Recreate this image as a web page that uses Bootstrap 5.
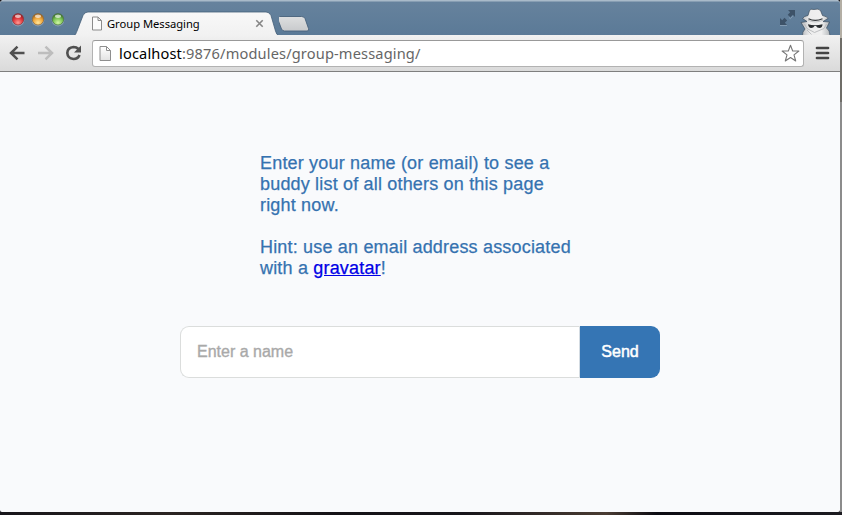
<!DOCTYPE html>
<html lang="en">
<head>
<meta charset="utf-8">
<meta name="viewport" content="width=device-width, initial-scale=1">
<title>Group Messaging</title>
<link rel="stylesheet" href="https://cdn.jsdelivr.net/npm/bootstrap@5.3.0/dist/css/bootstrap.min.css">
<style>
  html, body { height: 100%; }
  body { background: linear-gradient(90deg, #17151a, #2b2422 20%, #141216 40%, #17151a 55%, #4a3c33 72%, #0c0b12 78%, #1c1b20); padding: 0 2px 3px 0; font-family: "Liberation Sans", Arial, sans-serif; }
  .desktop-edge { width: 2px; height: 512px; right: 0; top: 0; background: linear-gradient(#b3aea4 0 38px, #6f6d68 38px 102px, #8c8c8c 102px); }
  .window { width: 840px; height: 512px; background: #f9fafc; border-radius: 4px 4px 2px 2px; }
  .titlebar { height: 35px; background: linear-gradient(#a9bac9 0, #a9bac9 1px, #66829d 2px, #5b7a97 100%); padding-left: 11px; }
  .lights { gap: 6px; padding-top: 12px; }
  .tab-row { padding-top: 11px; }
  .tab-shape { width: 206px; height: 24px; }
  .tab-shape > svg { left: 0; top: 0; }
  .tab-face { padding: 1px 15px 0 18px; height: 24px; }
  .tab-title { font: 11.2px/16px "Noto Sans", "Open Sans", sans-serif; color: #000; margin-left: 4px; letter-spacing: -.02px; }
  .toolbar { height: 37px; background: linear-gradient(#f1f1f1, #dadada); border-bottom: 1px solid #7f7f7f; padding: 0 10px 0 9px; }
  .omnibox { width: 712px; height: 27px; margin-left: 10px; background: #fff; border: 1px solid #b2b2b2; border-top-color: #999; border-radius: 3px; padding: 0 3px 0 6px; }
  .url { font: 14.6px/24px "Noto Sans", "Open Sans", sans-serif; color: #666; margin-left: 7px; letter-spacing: .15px; padding-bottom: 1px; }
  .url span { color: #000; }
  .intro { width: 320px; padding-top: 81px; margin-left: 260px; font-size: 18px; line-height: 21px; color: #3572b0; letter-spacing: .18px; -webkit-text-stroke: .25px; }
  .intro p { margin-bottom: 21px; }
  .intro a { color: #0000e6; }
  .name-form { width: 480px; height: 52px; margin: 47px 0 0 180px; }
  .name-form .form-control { border: 1px solid #dbdddc; border-right-color: #d3dbe2; border-radius: 9px 0 0 9px; padding: 0 16px; font-size: 16px; }
  .name-form .form-control::placeholder { color: #a9a9a9; opacity: 1; -webkit-text-stroke: .35px #a9a9a9; }
  .name-form .btn { width: 80px; background: #3575b4; color: #fff; border: 0; border-radius: 0 9px 9px 0; font-size: 16px; padding: 0; -webkit-text-stroke: .5px #fff; }
</style>
<script src="https://cdn.jsdelivr.net/npm/bootstrap@5.3.0/dist/js/bootstrap.bundle.min.js"></script>
</head>
<body class="overflow-hidden position-relative">
<div class="desktop-edge position-absolute"></div>
<div class="window overflow-hidden d-flex flex-column">
  <header class="titlebar d-flex align-items-start flex-shrink-0">
    <svg class="flex-shrink-0" width="54" height="35" viewBox="0 0 54 35">
      <defs>
        <radialGradient id="red" cx=".5" cy=".8" r=".7"><stop offset="0" stop-color="#ff9a94"/><stop offset=".6" stop-color="#e0383c"/><stop offset="1" stop-color="#a01c22"/></radialGradient>
        <radialGradient id="amber" cx=".5" cy=".8" r=".7"><stop offset="0" stop-color="#ffe69a"/><stop offset=".6" stop-color="#f0a83c"/><stop offset="1" stop-color="#a8691c"/></radialGradient>
        <radialGradient id="green" cx=".5" cy=".8" r=".7"><stop offset="0" stop-color="#d2f6a4"/><stop offset=".6" stop-color="#7cc456"/><stop offset="1" stop-color="#407c2c"/></radialGradient>
      </defs>
      <g fill="#8ba3b8"><circle cx="7" cy="20.2" r="6.2"/><circle cx="27" cy="20.2" r="6.2"/><circle cx="47" cy="20.2" r="6.2"/></g>
      <g stroke-width=".7"><circle cx="7" cy="19.3" r="5.7" fill="url(#red)" stroke="#81333b"/><circle cx="27" cy="19.3" r="5.7" fill="url(#amber)" stroke="#866336"/><circle cx="47" cy="19.3" r="5.7" fill="url(#green)" stroke="#48703f"/></g>
      <g fill="#fff" opacity=".65"><ellipse cx="7" cy="16.2" rx="3" ry="1.7"/><ellipse cx="27" cy="16.2" rx="3" ry="1.7"/><ellipse cx="47" cy="16.2" rx="3" ry="1.7"/></g>
    </svg>
    <div class="tab-row d-flex ms-2">
      <div class="tab-shape position-relative">
        <svg class="position-absolute" width="206" height="24" viewBox="0 0 206 24">
          <defs><linearGradient id="face" x2="0" y2="1"><stop stop-color="#f8f8f8"/><stop offset="1" stop-color="#f1f1f1"/></linearGradient></defs>
          <path d="M0 25C3 24 3 22 4 20L10 4.500Q11.500 1 15 1H193Q196.500 1 198 4.500L202.500 20Q203.500 24 206 25Z" fill="url(#face)" stroke="#455f79" stroke-width=".8"/>
        </svg>
        <div class="tab-face position-relative d-flex align-items-center">
          <svg width="12" height="15" viewBox="0 0 12 15"><path d="M1.500 1H7L10.500 4.500V14H1.500ZM7 1V4.500H10.500" fill="#fbfbfb" stroke="#8b8b8b"/></svg>
          <span class="tab-title">Group Messaging</span>
          <svg class="ms-auto" width="9" height="9" viewBox="0 0 9 9"><path d="M1.300 1.300L7.700 7.700M7.700 1.300L1.300 7.700" stroke="#858585" stroke-width="1.600"/></svg>
        </div>
      </div>
      <svg width="34" height="24" viewBox="0 0 34 24"><defs><linearGradient id="plus" x2="0" y2="1"><stop stop-color="#dedfe0"/><stop offset="1" stop-color="#c8cacc"/></linearGradient></defs><path d="M-1.500 7.500Q-2 5.500 .5 5.500H22.500Q25 5.500 26 7.500L29.500 17.500Q30.500 20 28 20H5.500Q3.500 20 2.500 18Z" fill="url(#plus)" stroke="#47617b" stroke-width=".9"/></svg>
    </div>
    <svg class="ms-auto flex-shrink-0" width="62" height="35" viewBox="0 0 62 35">
      <g fill="#3d5268"><path d="M10 10H17V17L14.800 14.800L12.300 17.300L9.700 14.700L12.200 12.200ZM2 18L4.200 20.200L6.500 17.800L9.200 20.500L6.800 22.800L9 25H2Z"/></g>
      <path d="M2 25.500H9M11 17.500L12.300 18.700L14.800 16.200" fill="none" stroke="#8ca2b7" stroke-width=".8"/>
      <defs><linearGradient id="spy" x2="1"><stop stop-color="#b4b7ba"/><stop offset=".3" stop-color="#ededed"/><stop offset=".7" stop-color="#f0f0f0"/><stop offset="1" stop-color="#b5b9bc"/></linearGradient></defs>
      <path d="M24.500 36Q24 32 27 29L23 22.500L29 21.500L24.500 18.500Q26 16 30 15.500L31.500 10.500Q32.500 8.500 36 9.500Q40.500 8.200 42.500 10.500L44.500 15.500Q49.500 16.500 50 18.500L45 21.500L51.500 22L48.500 28Q52 30 52 36Z" fill="url(#spy)" stroke="#3c4d5e" stroke-width=".7"/>
      <path d="M30 20.200Q37 23.700 45 20.200" fill="none" stroke="#c0c2c4" stroke-width="1"/>
      <path d="M30.500 18.800Q37 22 44.500 18.800" fill="none" stroke="#34383b" stroke-width="1.200"/>
      <path d="M30 24.300Q37 26 44.500 24.300Q44.500 28 41.500 28Q39 28 38 26H36.500Q35.500 28 33.200 28Q30.500 27.800 30 24.300Z" fill="#292d30"/>
      <path d="M26.500 24L29 28.500L36.500 32.500L46 28.500L48.500 24M29 30L33.500 34.500" fill="none" stroke="#b0b3b5" stroke-width=".8"/>
    </svg>
  </header>
  <nav class="toolbar d-flex align-items-center flex-shrink-0">
    <svg width="73" height="24" viewBox="0 0 73 24" fill="none">
      <path d="M15.500 12H2.500M8.500 5.700L2 12L8.500 18.300" stroke="#505050" stroke-width="2.500"/>
      <path d="M29 12H42.500M36.500 5.700L43 12L36.500 18.300" stroke="#bdbdbd" stroke-width="2.500"/>
      <path d="M69.500 8Q67.500 6 64.500 6Q58.500 6.500 58.300 12Q58.700 17.500 64.500 18Q69 18 70.500 14" stroke="#505050" stroke-width="2.600"/><path d="M72 4.500V11.500H65Z" fill="#505050"/>
    </svg>
    <div class="omnibox d-flex align-items-center flex-shrink-0">
      <svg width="13" height="17" viewBox="0 0 13 17"><defs><linearGradient id="sheet" x2="0" y2="1"><stop stop-color="#fff"/><stop offset="1" stop-color="#e2e2e2"/></linearGradient></defs><path d="M1 1.500H7.500L11.500 5.500V15.500H1ZM7.500 1.500V5.500H11.500" fill="url(#sheet)" stroke="#8e8e8e"/></svg>
      <div class="url"><span>localhost</span>:9876/modules/group-messaging/</div>
      <svg class="ms-auto" width="19" height="19" viewBox="0 0 19 19"><path d="M9.500 1.200L11.700 7H17.900L13 10.900L14.700 17L9.500 13.500L4.300 17L6 10.900L1.100 7H7.300Z" fill="#fff" stroke="#777" stroke-width="1.100" stroke-linejoin="round"/></svg>
    </div>
    <svg class="ms-auto" width="15" height="14" viewBox="0 0 15 14"><path d="M2 2H13M2 7H13M2 12H13" stroke="#444" stroke-width="2.700" stroke-linecap="round"/></svg>
  </nav>
  <main>
    <section class="intro">
      <p>Enter your name (or email) to see a<br>buddy list of all others on this page<br>right now.</p>
      <p class="mb-0">Hint: use an email address associated<br>with a <a href="#">gravatar</a>!</p>
    </section>
    <form class="name-form d-flex">
      <input class="form-control" type="text" placeholder="Enter a name" aria-label="Name">
      <button class="btn flex-shrink-0" type="button">Send</button>
    </form>
  </main>
</div>
</body>
</html>
